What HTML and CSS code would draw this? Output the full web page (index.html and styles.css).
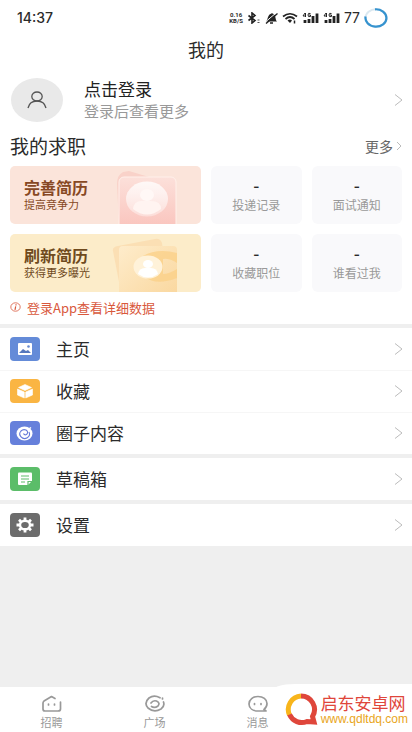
FILE: index.html
```html
<!DOCTYPE html>
<html lang="zh-CN">
<head>
<meta charset="utf-8">
<meta name="viewport" content="width=device-width, initial-scale=1">
<title>我的</title>
<link rel="stylesheet" href="styles.css">
</head>
<body>
<div class="app">
  <div class="top">
    <div class="status">
      <span class="time">14:37</span>
      <div class="indicators">
        <span class="speed"><span>0.16</span><span>KB/S</span></span>
        <svg width="14" height="12" viewBox="0 0 14 12"><path d="M1.500 3.500L8 8.500L5 11V1L8 3.500L1.500 8.500" fill="none" stroke="#222" stroke-width="1.600"/><path d="M10.500 8h2M10.500 10.500h2" stroke="#555"/></svg>
        <svg width="13" height="12" viewBox="0 0 13 12"><path d="M1 9.500C3 8 2.500 3 5.500 2Q7 .500 8.500 2C11 3 10 7.500 12 9.500z" fill="#222"/><path d="M5 11h3" stroke="#222" stroke-width="1.500"/><path d="M1 9.500L11 1" stroke="#fff" stroke-width="1"/><path d="M1 11.500L12.500 1.500" stroke="#222" stroke-width="1.400"/></svg>
        <svg width="16" height="12" viewBox="0 0 16 12"><path d="M1 4.500Q8-1 15 4.500M3.500 7Q8 3 12.500 7" fill="none" stroke="#222" stroke-width="1.700"/><path d="M5.500 8.500Q8 6.500 10 8.500L8 11z" fill="#222"/><path d="M12.500 8.500v3" stroke="#222" stroke-width="1.500"/></svg>
        <svg class="signal" width="17" height="12" viewBox="0 0 17 12"><path d="M3 8v3M7 7v4M11 4v7M15 1.500v9.500" stroke="#222" stroke-width="2.800"/><path d="M3 1L1 4h3M3.500 1v4M8.500 1.500Q6 .500 6 3T8.500 4.500V3H7" fill="none" stroke="#222"/></svg>
        <svg class="signal" width="17" height="12" viewBox="0 0 17 12"><path d="M3 8v3M7 7v4M11 4v7M15 1.500v9.500" stroke="#222" stroke-width="2.800"/><path d="M3 1L1 4h3M3.500 1v4M8.500 1.500Q6 .500 6 3T8.500 4.500V3H7" fill="none" stroke="#222"/></svg>
        <span class="battery">77</span>
        <svg width="24" height="20" viewBox="0 0 24 20"><ellipse cx="12" cy="10" rx="10.500" ry="8.700" fill="none" stroke="#dbe8f0" stroke-width="2"/><path d="M11 1.300A10.500 8.700 0 1 1 1.600 8.500" fill="none" stroke="#3693cf" stroke-width="2.200"/></svg>
      </div>
    </div>
    <h1>我的</h1>
    <a class="profile" href="#login">
      <span class="avatar"><svg width="20" height="18" viewBox="0 0 20 18"><ellipse cx="10" cy="5.500" rx="5.200" ry="4.500"/><path d="M1 17C2 12.500 5.500 10 10 10S18 12.500 19 17"/></svg></span>
      <span class="who"><strong>点击登录</strong><span>登录后查看更多</span></span>
      <svg class="chevron" width="9" height="14" viewBox="0 0 9 14"><path d="M1 1.500L8 7L1 12.500"/></svg>
    </a>
    <section class="jobs">
      <header>
        <h2>我的求职</h2>
        <a class="more" href="#more">更多<svg class="chevron" width="6" height="10" viewBox="0 0 6 10"><path d="M1 1L5 5L1 9"/></svg></a>
      </header>
      <div class="cards">
        <a class="promo peach" href="#resume">
          <strong>完善简历</strong><span>提高竞争力</span>
          <svg class="art" width="64" height="54" viewBox="0 0 64 54">
            <defs><linearGradient id="pink" x2="0" y2="1"><stop stop-color="#fce0da"/><stop offset="1" stop-color="#fac4bd"/></linearGradient><linearGradient id="face" x2="0" y2="1"><stop stop-color="#fff" stop-opacity=".8"/><stop offset="1" stop-color="#fff" stop-opacity=".35"/></linearGradient></defs>
            <path d="M2 14Q2 5 8 2L14 1L34 7L30 54H4z" fill="#f9d2c9"/>
            <rect x="4" y="7" width="57" height="52" rx="5" fill="url(#pink)" stroke="#fff0ea"/>
            <ellipse cx="32" cy="29" rx="21" ry="17.500" fill="url(#face)"/><ellipse cx="32" cy="25" rx="7" ry="6" fill="#fff8f6"/><path d="M18 39Q19 30 28 31H36Q46 31 46 39Q32 50 18 39" fill="#fff4f1"/>
          </svg>
        </a>
        <a class="stat" href="#applied"><b>-</b><span>投递记录</span></a>
        <a class="stat" href="#interview"><b>-</b><span>面试通知</span></a>
        <a class="promo cream" href="#refresh">
          <strong>刷新简历</strong><span>获得更多曝光</span>
          <svg class="art" width="68" height="54" viewBox="0 0 68 54">
            <defs><linearGradient id="gold" x2="1" y2="1"><stop stop-color="#feeccb"/><stop offset="1" stop-color="#fad79e"/></linearGradient></defs>
            <path d="M2 13Q1 9 7 8L44 1Q49 0 51 5L58 54H10z" fill="#fbdfb4"/>
            <rect x="8" y="8" width="58" height="51" rx="4" fill="url(#gold)"/>
            <path d="M32 18Q46 10 66 15V25Q58 20 52 21V36Q58 36 66 31V40Q45 48 34 39" fill="#fbcf83" opacity=".7"/>
            <ellipse cx="37" cy="29" rx="14.500" ry="11.500" fill="#fff2d9"/><ellipse cx="37" cy="26" rx="5" ry="4" fill="#fff"/><path d="M27 36Q28 30 34 30H40Q46 30 47 36Q37 43 27 36" fill="#fff"/>
          </svg>
        </a>
        <a class="stat" href="#saved"><b>-</b><span>收藏职位</span></a>
        <a class="stat" href="#visitors"><b>-</b><span>谁看过我</span></a>
      </div>
      <p class="notice"><svg width="11" height="10" viewBox="0 0 11 10"><ellipse cx="5.500" cy="5" rx="4.700" ry="4.200" fill="none" stroke="#d9583c" stroke-width=".8"/><path d="M6 2.200v1.200M5.700 4.300L5 7.800" stroke="#d9583c" stroke-width="1.200"/></svg>登录App查看详细数据</p>
    </section>
  </div>
  <nav class="menu">
    <div class="group">
      <a href="#home"><span class="tile blue"><svg width="30" height="24" viewBox="0 0 30 24"><rect x="8" y="6" width="14" height="12" rx="1" fill="#fff"/><path d="M9 16L13 12L16 14L18 13L21 16z" fill="#5577bd"/><circle cx="18.500" cy="9.500" r="1.300" fill="#6688ce"/></svg></span><span class="name">主页</span><svg class="chevron" width="9" height="14" viewBox="0 0 9 14"><path d="M1 1.500L8 7L1 12.500"/></svg></a>
      <a href="#favorites"><span class="tile orange"><svg width="30" height="24" viewBox="0 0 30 24"><path d="M15 5.500L21.500 8.500L15 11.500L8.500 8.500zM7.500 10L14.300 13V19L7.500 16zM22.500 10L15.700 13V19L22.500 16z" fill="#fff" stroke="#fff" stroke-width=".6" stroke-linejoin="round"/></svg></span><span class="name">收藏</span><svg class="chevron" width="9" height="14" viewBox="0 0 9 14"><path d="M1 1.500L8 7L1 12.500"/></svg></a>
      <a href="#circle"><span class="tile indigo"><svg width="30" height="24" viewBox="0 0 30 24"><ellipse cx="14.500" cy="12.500" rx="8" ry="7" fill="#fff"/><path d="M19 11A4.800 4.500 0 1 1 11 10Q13 8 16 9Q19 11 16.500 13.500Q14.500 14.500 13.500 12.500" fill="none" stroke="#6379d8" stroke-width="1.100"/><path d="M19.500 7.500L21 6.500" stroke="#fff" stroke-width="1.500"/></svg></span><span class="name">圈子内容</span><svg class="chevron" width="9" height="14" viewBox="0 0 9 14"><path d="M1 1.500L8 7L1 12.500"/></svg></a>
    </div>
    <div class="group">
      <a href="#drafts"><span class="tile green"><svg width="30" height="24" viewBox="0 0 30 24"><path d="M9 5.500H21Q22 5.500 22 6.500V14L18 18H9Q8 18 8 17V6.500Q8 5.500 9 5.500" fill="#fff"/><path d="M11 9h8M11 12h8M11 15h4M18 18v-3.500h4" fill="none" stroke="#60bd6c" stroke-width="1.200"/></svg></span><span class="name">草稿箱</span><svg class="chevron" width="9" height="14" viewBox="0 0 9 14"><path d="M1 1.500L8 7L1 12.500"/></svg></a>
    </div>
    <div class="group">
      <a href="#settings"><span class="tile gray"><svg width="30" height="24" viewBox="0 0 30 24"><ellipse cx="15" cy="12" rx="5" ry="4.300" fill="none" stroke="#fff" stroke-width="2.400"/><path d="M15 4.500v3M15 16.500v3M6.500 12h3M20.500 12h3M9 6.800l2 1.800M19 15.400l2 1.800M21 6.800l-2 1.800M11 15.400l-2 1.800" stroke="#fff" stroke-width="2.800"/></svg></span><span class="name">设置</span><svg class="chevron" width="9" height="14" viewBox="0 0 9 14"><path d="M1 1.500L8 7L1 12.500"/></svg></a>
    </div>
  </nav>
  <footer>
    <nav class="tabs">
      <a href="#recruit"><svg width="22" height="18" viewBox="0 0 22 18"><path d="M14 3.500L10.500 1.500L3 6Q2 7 2 8V14Q2 16 4 16H17Q19.500 16 19.500 14V7"/><path d="M7.500 9v1M13.500 9v1"/></svg>招聘</a>
      <a href="#square"><svg width="22" height="18" viewBox="0 0 22 18"><path d="M16 2.800Q10-.5 5 3Q-.5 8 4 13Q10 18 17 14Q21 11 19.500 7M7 8Q9 5 12.500 6Q16.500 8 14 11Q10.500 13.500 7.500 11.500M18.500 3v1"/></svg>广场</a>
      <a href="#messages"><svg width="22" height="18" viewBox="0 0 22 18"><path d="M17 14.500Q20 12 20 8.500C20 4 16 1.500 11 1.500S2 4.500 2 9S6 16 11 16H19L17 14.500"/><path d="M7.500 8.500v1M14 8.500v1"/></svg>消息</a>
    </nav>
    <div class="brand">
      <svg width="34" height="36" viewBox="0 0 34 36"><path d="M4.500 23A13.500 13.500 0 0 1 16 4" fill="none" stroke="#f8b51b" stroke-width="5"/><path d="M16 4A13.500 13.500 0 0 1 27.500 24.500L29 30L22 29.500A13.500 13.500 0 0 1 4.500 22.500" fill="none" stroke="#df463b" stroke-width="5"/></svg>
      <div><strong>启东安卓网</strong><span>www.qdltdq.com</span></div>
    </div>
  </footer>
</div>
</body>
</html>
```
FILE: styles.css
```css
* { box-sizing: border-box; }
body { margin: 0; background: #efefef; color: #2b2b2b; font-family: "Noto Sans CJK SC", sans-serif; }
a { color: inherit; text-decoration: none; }
h1, h2, p { margin: 0; font-weight: 400; }
svg { display: block; flex: none; }
.app { min-height: 100vh; display: flex; flex-direction: column; }
.top { background: #fff; }

.status { display: flex; align-items: center; justify-content: space-between; height: 36px; padding: 0 24px 0 17px; }
.time { font: 500 14px/20px Inter, sans-serif; }
.indicators { display: flex; align-items: center; gap: 4px; }
.speed { display: grid; font: 700 6px/6px Roboto, sans-serif; text-align: center; }
.battery { font: 400 14px/20px Inter, sans-serif; }

h1 { font-size: 18px; line-height: 26px; text-align: center; }
.chevron { fill: none; stroke: #bcbcbc; stroke-width: 1; }
.profile { display: flex; align-items: center; gap: 21px; padding: 16px 9px 12px 11px; }
.avatar { display: grid; place-items: center; width: 52px; height: 44px; border-radius: 50%; background: #e9e9e9; }
.avatar svg { fill: none; stroke: #555; stroke-width: 1.3; }
.who { flex: 1; display: grid; font-size: 15px; line-height: 22px; color: #999; }
.who strong { font-size: 17px; font-weight: 400; color: #222; }

.jobs { padding: 0 10px; }
.jobs header { display: flex; align-items: center; justify-content: space-between; height: 24px; }
h2 { font-size: 19px; line-height: 24px; }
.more { display: flex; align-items: center; gap: 3px; font-size: 14px; line-height: 20px; color: #666; }
.cards { display: grid; grid-template-columns: 190fr 90fr 90fr; grid-auto-rows: 58px; gap: 10px; padding-top: 8px; }
.promo { position: relative; overflow: hidden; display: flex; flex-direction: column; justify-content: center; padding-left: 14px; border-radius: 5px; }
.promo strong { font-size: 16px; line-height: 18px; font-weight: 700; }
.promo span { font-size: 11px; line-height: 16px; }
.art { position: absolute; right: 22px; bottom: 0; }
.peach { background: #fbe4da; color: #874824; }
.cream { background: #fcecc9; color: #6f4a1d; }
.stat { display: flex; flex-direction: column; align-items: center; justify-content: center; border-radius: 6px; background: #f9f9fb; }
.stat b { font-size: 17px; line-height: 20px; font-weight: 500; }
.stat span { font-size: 12px; line-height: 20px; color: #999; }
.notice { display: flex; align-items: center; gap: 6px; height: 32px; padding-bottom: 2px; font-size: 13px; color: #d9583c; }

.menu { flex: 1; display: flex; flex-direction: column; gap: 4px; padding-top: 4px; }
.group { background: #fff; }
.group a { display: flex; align-items: center; height: 42px; padding: 0 9px 0 10px; }
.group a + a { box-shadow: inset 0 1px #f6f6f6; }
.tile { width: 30px; height: 24px; border-radius: 4px; }
.blue { background: #648bd8; }
.orange { background: #fab543; }
.indigo { background: #6680db; }
.green { background: #5bbd69; }
.gray { background: #6c6c6c; }
.name { flex: 1; margin-left: 16px; font-size: 17px; line-height: 24px; }

footer { position: relative; }
.tabs { display: grid; grid-template-columns: repeat(4, 1fr); height: 45px; background: #fff; }
.tabs a { display: flex; flex-direction: column; align-items: center; padding-top: 8px; font-size: 11px; line-height: 18px; color: #999; }
.tabs svg { fill: none; stroke: #999; stroke-width: 1.7; stroke-linecap: round; stroke-linejoin: round; }
.brand { position: absolute; right: 0; bottom: 0; display: flex; align-items: center; gap: 2px; height: 48px; padding: 4px 4px 0 14px; border-top-left-radius: 24px 8px; background: #fff; }
.brand div { display: grid; }
.brand strong { font-size: 17px; line-height: 18px; font-weight: 400; color: #df463b; }
.brand span { font: 12px/14px "Liberation Sans", sans-serif; color: #e9a51b; }
```
